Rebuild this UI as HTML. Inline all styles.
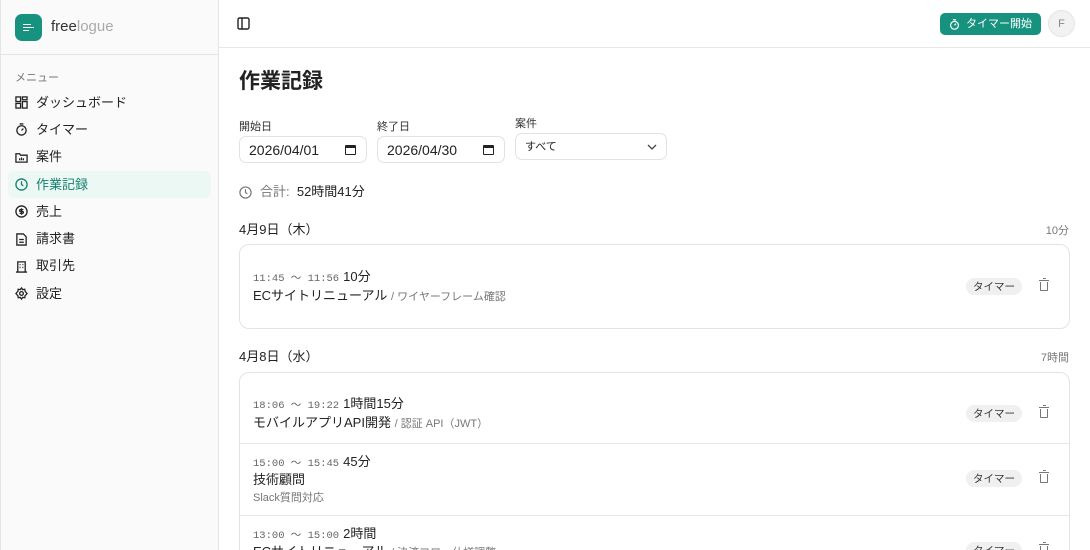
<!DOCTYPE html>
<html><head><meta charset="utf-8"><style>
*{box-sizing:border-box;margin:0;padding:0}
html{width:1090px;height:550px;overflow:hidden}
body{width:1090px;height:550px;overflow:hidden;font-family:"Liberation Sans","Noto Sans CJK JP",sans-serif;color:#222;background:#fff;position:relative;font-size:13px;line-height:16px}
.side{position:absolute;left:0;top:0;width:219px;height:550px;background:#fafafa;border-right:1px solid #e5e5e5;border-left:1px solid #e5e5e5}
.logo{height:55px;border-bottom:1px solid #e5e5e5;display:flex;align-items:center;padding-left:14px}
.lg{width:27px;height:27px;border-radius:7px;background:#16927f;position:relative}
.lg i{position:absolute;left:8px;height:1.5px;background:#fff}
.brand{margin-left:9px;font-size:15px;color:#333}.brand span{color:#aaa}
.mh{font-size:11px;color:#777;margin:15px 0 0 14px;height:14px}
.nav{margin-top:5px}
.it{height:27.3px;margin:0 7px;display:flex;align-items:center;padding-left:7px;font-size:13px;color:#222;border-radius:6px}
.it svg{width:13px;height:13px;margin-right:8px;flex:none}
.it.on{background:#ecf8f4;color:#16806f}
.top{position:absolute;left:219px;right:0;top:0;height:48px;border-bottom:1px solid #e8e8e8}
.btn{position:absolute;left:721px;top:13px;width:101px;height:22px;background:#16927f;border-radius:5px;color:#fff;font-size:11px;display:flex;align-items:center;padding-left:9px;white-space:nowrap}
.av{position:absolute;left:829px;top:10px;width:27px;height:27px;border-radius:50%;background:#f2f2f2;border:1px solid #e4e4e4;color:#888;font-size:11px;display:flex;align-items:center;justify-content:center}
.main{position:absolute;left:239px;top:0;width:831px}
h1{position:absolute;top:69px;font-size:21px;line-height:26px;font-weight:bold}
.lab{position:absolute;font-size:11px;color:#333}
.inp{position:absolute;height:27px;border:1px solid #e2e2e2;border-radius:7px;font-size:14px;display:flex;align-items:center;padding-left:9px}
.cal{position:absolute;right:10px;top:8px;width:11px;height:10px;border:1.5px solid #222;border-top-width:3px;border-radius:1px}
.tot{position:absolute;top:184px;left:0;font-size:13px;display:flex;align-items:center}
.dh{position:absolute;left:0;width:831px;font-size:13px}
.dh span{position:absolute;right:1px;top:1px;font-size:11px;color:#777}
.card{position:absolute;left:0;width:831px;border:1px solid #e3e3e3;border-radius:10px;overflow:hidden}
.row{position:relative;border-bottom:1px solid #e8e8e8}
.tm{position:absolute;left:13px;font-family:"Liberation Mono",monospace;font-size:10.5px;color:#666;white-space:nowrap}
.dur{font-family:"Liberation Sans","Noto Sans CJK JP",sans-serif;font-size:13px;color:#222;margin-left:4px}
.pj{position:absolute;left:13px;font-size:13px;white-space:nowrap}
.pj small{font-size:11px;color:#777}
.sub{position:absolute;left:13px;font-size:11px;color:#777}
.bd{position:absolute;left:726px;width:56px;height:17px;background:#f0f0f0;border-radius:9px;font-size:10.5px;display:flex;align-items:center;justify-content:center;color:#333}
.tr{position:absolute;left:800px;width:8px;height:9px;border:1.2px solid #777;border-top:none;border-radius:0 0 1px 1px}
.tr:before{content:"";position:absolute;left:-2.5px;top:-2px;width:10px;height:1.2px;background:#777}
.tr:after{content:"";position:absolute;left:1.5px;top:-4px;width:3px;height:1.2px;background:#777}
</style></head><body>
<div class="side">
<div class="logo"><div class="lg"><i style="top:10px;width:8px"></i><i style="top:13px;width:11px"></i><i style="top:16px;width:6px"></i></div><div class="brand">free<span>logue</span></div></div>
<div class="mh">メニュー</div>
<div class="nav">
<div class="it"><svg viewBox="0 0 14 14" fill="none" stroke="#222" stroke-width="1.4"><rect x="1" y="1" width="5" height="5"/><rect x="8" y="1" width="5" height="3"/><rect x="1" y="8" width="5" height="5"/><rect x="8" y="6" width="5" height="7"/></svg>ダッシュボード</div>
<div class="it"><svg viewBox="0 0 14 14" fill="none" stroke="#222" stroke-width="1.4"><circle cx="7" cy="8" r="5"/><path d="M5 1h4M7 8l2-2"/></svg>タイマー</div>
<div class="it"><svg viewBox="0 0 14 14" fill="none" stroke="#222" stroke-width="1.4"><path d="M1 3h4l1 1.5h7V12H1z"/><path d="M5 10V8M7 10V7M9 10V8"/></svg>案件</div>
<div class="it on"><svg viewBox="0 0 14 14" fill="none" stroke="#16806f" stroke-width="1.4"><circle cx="7" cy="7" r="6"/><path d="M7 3.5V7l2 1.5"/></svg>作業記録</div>
<div class="it"><svg viewBox="0 0 14 14" fill="none" stroke="#222" stroke-width="1.4"><circle cx="7" cy="7" r="6"/><path d="M9 5H6a1 1 0 000 2h2a1 1 0 010 2H5M7 3.5v7"/></svg>売上</div>
<div class="it"><svg viewBox="0 0 14 14" fill="none" stroke="#222" stroke-width="1.4"><path d="M2 1h7l3 3v9H2z"/><path d="M4.5 7h5M4.5 10h5"/></svg>請求書</div>
<div class="it"><svg viewBox="0 0 14 14" fill="none" stroke="#222" stroke-width="1.4"><path d="M3 13V2h8v11M1 13h12M5 5h1M8 5h1M5 8h1M8 8h1"/></svg>取引先</div>
<div class="it"><svg viewBox="0 0 14 14" fill="none" stroke="#222" stroke-width="1.4"><circle cx="7" cy="7" r="2"/><path d="M7 1l1.3 1.8 2.2-.4.4 2.2L13 7l-2.1 2.4-.4 2.2-2.2-.4L7 13l-1.3-1.8-2.2.4-.4-2.2L1 7l2.1-2.4.4-2.2 2.2.4z"/></svg>設定</div>
</div></div>
<div class="top">
<svg style="position:absolute;left:18px;top:17px" width="13" height="13" viewBox="0 0 13 13" fill="none" stroke="#222" stroke-width="1.4"><rect x="1" y="1" width="11" height="11" rx="1.5"/><path d="M5 1v11"/></svg>
<div class="btn"><svg width="11" height="11" viewBox="0 0 14 14" fill="none" stroke="#fff" stroke-width="1.5" style="margin-right:6px"><circle cx="7" cy="8" r="5"/><path d="M5 1h4M7 8l2-2"/></svg>タイマー開始</div>
<div class="av">F</div>
</div>
<div class="main">
<h1>作業記録</h1>
<div class="lab" style="left:0;top:119px">開始日</div>
<div class="inp" style="left:0;top:136px;width:128px">2026/04/01<i class="cal"></i></div>
<div class="lab" style="left:138px;top:119px">終了日</div>
<div class="inp" style="left:138px;top:136px;width:128px">2026/04/30<i class="cal"></i></div>
<div class="lab" style="left:276px;top:116px">案件</div>
<div class="inp" style="left:276px;top:133px;width:152px;font-size:11px">すべて<svg style="position:absolute;right:9px;top:10px" width="10" height="6" viewBox="0 0 10 6" fill="none" stroke="#444" stroke-width="1.3"><path d="M1 1l4 4 4-4"/></svg></div>
<div class="tot"><svg width="13" height="13" viewBox="0 0 14 14" fill="none" stroke="#777" stroke-width="1.3" style="margin-right:8px"><circle cx="7" cy="7" r="6"/><path d="M7 3.5V7l2 1.5"/></svg><span style="color:#777">合計:</span>&nbsp; 52時間41分</div>
<div class="dh" style="top:222px">4月9日（木）<span>10分</span></div>
<div class="card" style="top:244px;height:85px">
<div class="tm" style="top:24px">11:45 ～ 11:56<span class="dur">10分</span></div>
<div class="pj" style="top:43px">ECサイトリニューアル <small>/ ワイヤーフレーム確認</small></div>
<div class="bd" style="top:33px">タイマー</div><div class="tr" style="top:37px"></div>
</div>
<div class="dh" style="top:349px">4月8日（水）<span>7時間</span></div>
<div class="card" style="top:372px;height:200px">
<div class="row" style="height:71px">
<div class="tm" style="top:23px">18:06 ～ 19:22<span class="dur">1時間15分</span></div>
<div class="pj" style="top:42px">モバイルアプリAPI開発 <small>/ 認証 API（JWT）</small></div>
<div class="bd" style="top:32px">タイマー</div><div class="tr" style="top:36px"></div></div>
<div class="row" style="height:72px">
<div class="tm" style="top:10px">15:00 ～ 15:45<span class="dur">45分</span></div>
<div class="pj" style="top:28px">技術顧問</div>
<div class="sub" style="top:46px">Slack質問対応</div>
<div class="bd" style="top:26px">タイマー</div><div class="tr" style="top:30px"></div></div>
<div class="row" style="height:60px;border:none">
<div class="tm" style="top:10px">13:00 ～ 15:00<span class="dur">2時間</span></div>
<div class="pj" style="top:28px">ECサイトリニューアル <small>/ 決済フロー仕様調整</small></div>
<div class="bd" style="top:26px">タイマー</div><div class="tr" style="top:30px"></div></div>
</div>
</div>
</body></html>
